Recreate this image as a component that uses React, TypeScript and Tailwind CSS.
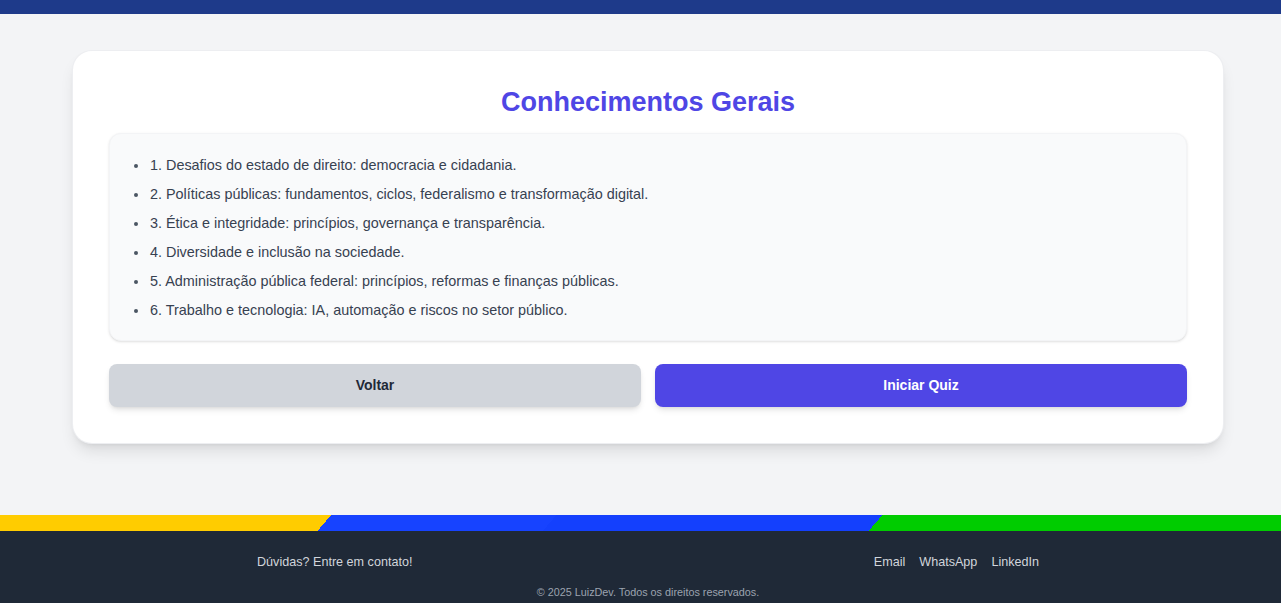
import React from "react";

const topics = [
  "1. Desafios do estado de direito: democracia e cidadania.",
  "2. Políticas públicas: fundamentos, ciclos, federalismo e transformação digital.",
  "3. Ética e integridade: princípios, governança e transparência.",
  "4. Diversidade e inclusão na sociedade.",
  "5. Administração pública federal: princípios, reformas e finanças públicas.",
  "6. Trabalho e tecnologia: IA, automação e riscos no setor público.",
];

const App = () => {
  return (
    <div className="min-h-screen bg-[#f3f4f6] font-['Liberation_Sans',Arial,sans-serif]">
      <div className="h-[14px] bg-[#1e3a8a]" />

      <main className="pt-9 pb-[71px]">
        <div className="ml-[72px] w-[1152px] bg-white rounded-[20px] border border-gray-200/70 shadow-lg px-9 pt-[33px] pb-9">
          <h1 className="text-center text-[27px] leading-[36px] font-bold text-[#4f46e5] mb-[13px]">
            Conhecimentos Gerais
          </h1>

          <div className="bg-[#f9fafb] rounded-xl border border-gray-100 shadow-sm pt-[21px] pb-[19px] pl-[39px] pr-6">
            <ul className="list-disc text-[14.4px] leading-[21px] text-[#374151] marker:text-[#4b5563]">
              {topics.map((t) => (
                <li key={t} className="mb-2 last:mb-0 pl-[1px]">
                  {t}
                </li>
              ))}
            </ul>
          </div>

          <div className="flex gap-[14px] mt-[23px]">
            <button
              type="button"
              className="flex-1 h-[43px] pb-[2px] rounded-lg bg-[#d1d5db] text-[#1f2937] text-sm font-bold shadow-md"
            >
              Voltar
            </button>
            <button
              type="button"
              className="flex-1 h-[43px] pb-[2px] rounded-lg bg-[#4f46e5] text-white text-sm font-bold shadow-md"
            >
              Iniciar Quiz
            </button>
          </div>
        </div>
      </main>

      <footer>
        <div className="h-4 bg-[linear-gradient(131deg,#ffcc00_250px,#1743ff_250px,#1743ff_420px,#1440fd_420px,#1440fd_666px,#00cc00_666px)]" />
        <div className="bg-[#1f2937] pt-[21px] pb-3">
          <div className="w-[797px] mx-auto pl-[15px]">
            <div className="flex justify-between items-center text-[12.6px] leading-5 text-[#d1d5db]">
              <span>Dúvidas? Entre em contato!</span>
              <div className="flex gap-[14px]">
                <a href="#">Email</a>
                <a href="#">WhatsApp</a>
                <a href="#">LinkedIn</a>
              </div>
            </div>
            <p className="mt-[12px] text-center text-[10.8px] leading-4 text-[#9ca3af]">
              © 2025 LuizDev. Todos os direitos reservados.
            </p>
          </div>
        </div>
      </footer>
    </div>
  );
};

export default App;
